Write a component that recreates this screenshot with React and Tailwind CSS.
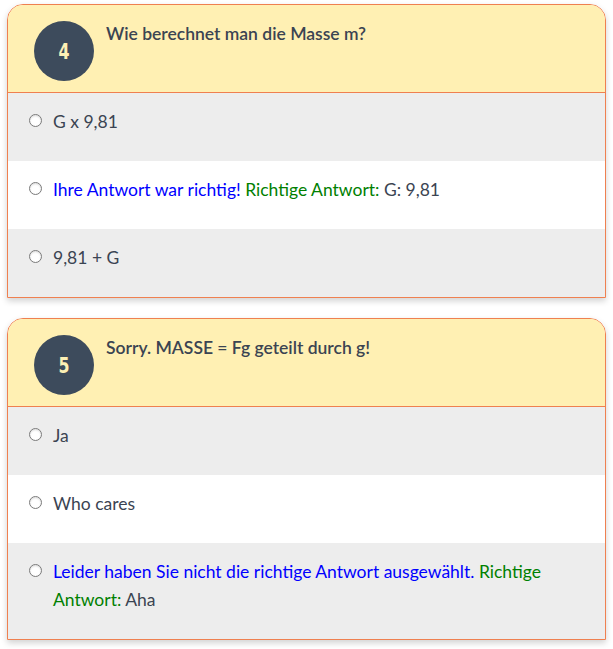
import React from 'react';

const Radio = () => (
  <span className="mt-[6px] w-[13px] h-[13px] shrink-0 rounded-full border border-[#7a7a7a] bg-white shadow-[inset_0_1px_2px_rgba(0,0,0,0.15)]" />
);

const Option = ({ bg, children }) => (
  <div className={`flex items-start gap-[11px] pl-[21px] pr-[40px] pt-[15px] pb-[25px] ${bg}`}>
    <Radio />
    <p className="text-[17.5px] leading-[28px] text-[#3b4452]">{children}</p>
  </div>
);

const Card = ({ num, title, children }) => (
  <div className="border border-[#ef8050] rounded-t-[16px] overflow-hidden shadow-[0_3px_6px_rgba(0,0,0,0.18)]">
    <div className="flex items-start h-[88px] bg-[#fff0b3] border-b border-[#ef8050] pl-[26px] pt-[16px]">
      <div className="w-[60px] h-[60px] shrink-0 rounded-full bg-[#3d4b5c] flex items-center justify-center">
        <span className="inline-block scale-x-[0.8] text-[#fdf0b5] text-[22px] font-bold font-['DejaVu_Sans_Condensed','Liberation_Sans_Narrow',sans-serif]">
          {num}
        </span>
      </div>
      <h3 className="ml-[12px] mt-[1px] text-[17.5px] leading-[24px] font-semibold text-[#3b4452]">{title}</h3>
    </div>
    {children}
  </div>
);

export default function App() {
  return (
    <div className="min-h-screen bg-white px-[7px] pt-[4px] font-['Lato',sans-serif]">
      <Card num="4" title="Wie berechnet man die Masse m?">
        <Option bg="bg-[#ededed]">G x 9,81</Option>
        <Option bg="bg-white">
          <span className="text-[#0000ff]">Ihre Antwort war richtig!</span>{' '}
          <span className="text-[#008000]">Richtige Antwort:</span> G: 9,81
        </Option>
        <Option bg="bg-[#ededed]">9,81 + G</Option>
      </Card>
      <div className="h-[20px]" />
      <Card num="5" title="Sorry. MASSE = Fg geteilt durch g!">
        <Option bg="bg-[#ededed]">Ja</Option>
        <Option bg="bg-white">Who cares</Option>
        <Option bg="bg-[#ededed]">
          <span className="text-[#0000ff]">Leider haben Sie nicht die richtige Antwort ausgewählt.</span>{' '}
          <span className="text-[#008000]">Richtige Antwort:</span> Aha
        </Option>
      </Card>
    </div>
  );
}
